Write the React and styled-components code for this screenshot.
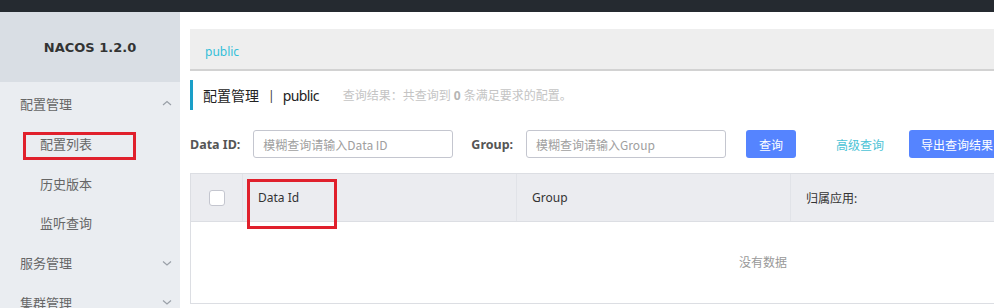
import React from "react";
import styled, { createGlobalStyle } from "styled-components";

const Global = createGlobalStyle`
  html, body { margin: 0; padding: 0; background: #fff; }
  body { font-family: "Noto Sans", "Noto Sans CJK SC", sans-serif; font-size: 12px; color: #333; }
  * { box-sizing: border-box; }
`;

const Page = styled.div`
  position: relative;
  width: 994px;
  height: 308px;
  overflow: hidden;
  display: flex;
  flex-direction: column;
`;

const TopBar = styled.div`
  height: 12px;
  flex: none;
  background: #252a30;
`;

const Body = styled.div`
  flex: 1;
  display: flex;
  min-height: 0;
`;

const Sidebar = styled.aside`
  width: 180px;
  flex: none;
  background: #eaedf1;
  display: flex;
  flex-direction: column;
`;

const Logo = styled.div`
  height: 70px;
  flex: none;
  background: #d9dee4;
  display: flex;
  align-items: center;
  justify-content: center;
  font-family: "DejaVu Sans", sans-serif;
  font-weight: bold;
  font-size: 13px;
  color: #333;
`;

const MenuItem = styled.div`
  flex: none;
  height: ${(p) => (p.$first ? 42 : 39.6)}px;
  display: flex;
  align-items: center;
  justify-content: space-between;
  padding: 0 3px 0 ${(p) => (p.$sub ? 40 : 20)}px;
  font-family: "Noto Sans CJK SC", sans-serif;
  font-size: 13px;
  color: #666;
`;

const Chevron = ({ up }) => (
  <svg width="20" height="10" viewBox="0 0 20 10">
    <path
      d={up ? "M6 7 L10 3.5 L14 7" : "M6 3.5 L10 7 L14 3.5"}
      fill="none"
      stroke="#9aa0a8"
      strokeWidth="1.2"
    />
  </svg>
);

const Main = styled.main`
  flex: none;
  width: 1156px;
  padding: 17px 0 0 10px;
  display: flex;
  flex-direction: column;
`;

const Breadcrumb = styled.div`
  flex: none;
  height: 42px;
  background: #eee;
  border-bottom: 2px solid #d2d2d2;
  display: flex;
  align-items: center;
  padding-left: 15px;
  padding-top: 5px;
  color: #33bfd9;
  font-size: 12px;
`;

const TitleRow = styled.div`
  flex: none;
  margin-top: 9px;
  height: 30px;
  border-left: 3px solid #1a9fc8;
  display: flex;
  align-items: center;
  padding-left: 10px;
`;

const Title = styled.span`
  font-family: "Noto Sans", "Noto Sans CJK SC", sans-serif;
  font-size: 14px;
  color: #222;
  letter-spacing: ${(p) => p.$ls || 0}px;
`;

const Sep = styled.span`
  margin: 0 8px 0 9px;
  color: #333;
`;

const Summary = styled.span`
  margin-left: 24px;
  font-family: "Noto Sans CJK SC", sans-serif;
  font-size: 12px;
  color: #c4c4c4;
  b { color: #b5b5b5; font-family: "Noto Sans", sans-serif; margin: 0 3px; }
`;

const SearchRow = styled.div`
  flex: none;
  margin-top: 20px;
  height: 28px;
  display: flex;
  align-items: center;
`;

const Label = styled.span`
  font-family: "Noto Sans", sans-serif;
  font-weight: bold;
  font-size: 12.5px;
  color: #555;
  margin-left: ${(p) => p.$ml || 0}px;
  margin-right: ${(p) => p.$mr || 0}px;
`;

const Input = styled.div`
  width: 200px;
  height: 28px;
  border: 1px solid #c4c6cf;
  border-radius: 3px;
  display: flex;
  align-items: center;
  padding-left: 9px;
  font-family: "Noto Sans CJK SC", sans-serif;
  font-size: 12px;
  color: #a0a0a0;
`;

const Button = styled.div`
  height: 28px;
  padding: 0 ${(p) => p.$px}px;
  margin-left: ${(p) => p.$ml}px;
  background: #5584ff;
  border-radius: 3px;
  color: #fff;
  font-family: "Noto Sans CJK SC", sans-serif;
  font-size: 12px;
  display: flex;
  align-items: center;
  white-space: nowrap;
`;

const LinkText = styled.span`
  margin-left: 40px;
  color: #4cc3d6;
  font-family: "Noto Sans CJK SC", sans-serif;
  font-size: 12px;
`;

const Table = styled.div`
  flex: none;
  margin-top: 15px;
  border: 1px solid #dcdee3;
  display: flex;
  flex-direction: column;
`;

const HeadRow = styled.div`
  height: 48px;
  background: #ebecf0;
  display: grid;
  grid-template-columns: 51px 274px 274px 1fr;
  border-bottom: 1px solid #dcdee3;
`;

const HeadCell = styled.div`
  display: flex;
  align-items: center;
  justify-content: ${(p) => (p.$center ? "center" : "flex-start")};
  padding-left: ${(p) => (p.$center ? 0 : 15)}px;
  border-left: ${(p) => (p.$first ? "none" : "1px solid #e1e3e8")};
  font-family: "Noto Sans", "Noto Sans CJK SC", sans-serif;
  font-size: 12px;
  color: #333;
`;

const Check = styled.span`
  width: 16px;
  height: 16px;
  border: 1px solid #c4c6cf;
  border-radius: 3px;
  background: #fff;
`;

const Empty = styled.div`
  height: 81px;
  display: flex;
  align-items: center;
  justify-content: center;
  padding-bottom: 2px;
  font-family: "Noto Sans CJK SC", sans-serif;
  font-size: 12px;
  color: #999;
`;

const Mark = styled.div`
  position: absolute;
  border: 3px solid #e0202c;
  left: ${(p) => p.$x}px;
  top: ${(p) => p.$y}px;
  width: ${(p) => p.$w}px;
  height: ${(p) => p.$h}px;
`;

export default function App() {
  return (
    <Page>
      <Global />
      <TopBar />
      <Body>
        <Sidebar>
          <Logo>NACOS 1.2.0</Logo>
          <MenuItem $first>
            配置管理
            <Chevron up />
          </MenuItem>
          <MenuItem $sub>配置列表</MenuItem>
          <MenuItem $sub>历史版本</MenuItem>
          <MenuItem $sub>监听查询</MenuItem>
          <MenuItem>
            服务管理
            <Chevron />
          </MenuItem>
          <MenuItem>
            集群管理
            <Chevron />
          </MenuItem>
        </Sidebar>
        <Main>
          <Breadcrumb>public</Breadcrumb>
          <TitleRow>
            <Title>配置管理</Title>
            <Sep>|</Sep>
            <Title $ls={-0.6}>public</Title>
            <Summary>
              查询结果：共查询到<b>0</b>条满足要求的配置。
            </Summary>
          </TitleRow>
          <SearchRow>
            <Label $mr={13}>Data ID:</Label>
            <Input>模糊查询请输入Data ID</Input>
            <Label $ml={18} $mr={13}>Group:</Label>
            <Input>模糊查询请输入Group</Input>
            <Button $px={13} $ml={20}>查询</Button>
            <LinkText>高级查询</LinkText>
            <Button $px={12} $ml={25}>导出查询结果</Button>
          </SearchRow>
          <Table>
            <HeadRow>
              <HeadCell $first $center>
                <Check />
              </HeadCell>
              <HeadCell>Data Id</HeadCell>
              <HeadCell>Group</HeadCell>
              <HeadCell>归属应用:</HeadCell>
            </HeadRow>
            <Empty>没有数据</Empty>
          </Table>
        </Main>
      </Body>
      <Mark $x={23} $y={132} $w={113} $h={28} />
      <Mark $x={247} $y={179} $w={90} $h={50} />
    </Page>
  );
}
